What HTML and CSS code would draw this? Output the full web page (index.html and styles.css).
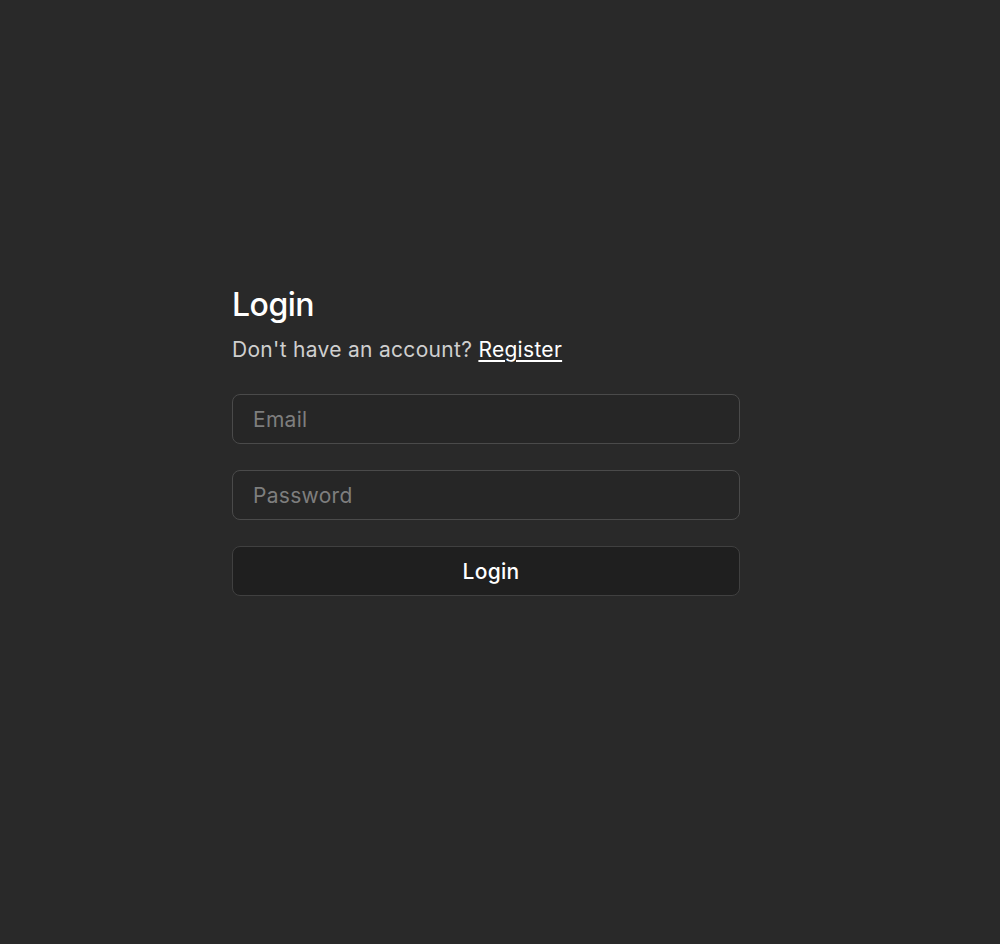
FILE: index.html
```html
<!DOCTYPE html>
<html>
<head>
<meta charset="utf-8">
<link rel="stylesheet" href="styles.css">
</head>
<body>
<main class="page">
  <form class="card">
    <h1 class="title">Login</h1>
    <p class="subtitle">Don't have an account? <a href="#" class="link">Register</a></p>
    <input class="field" type="email" placeholder="Email">
    <input class="field" type="password" placeholder="Password">
    <button class="btn" type="button">Login</button>
  </form>
</main>
</body>
</html>
```

FILE: styles.css
```css
html, body {
  margin: 0;
  padding: 0;
  background: #292929;
  font-family: Inter, "Noto Sans", sans-serif;
}
.page {
  display: flex;
  justify-content: center;
  padding: 286px 28px 0 0;
}
.card {
  width: 508px;
  display: flex;
  flex-direction: column;
}
.title {
  margin: 0;
  font-size: 32px;
  line-height: 38px;
  font-weight: 500;
  letter-spacing: -0.5px;
  color: #ffffff;
}
.subtitle {
  margin: 12px 0 30px;
  font-size: 21px;
  line-height: 28px;
  letter-spacing: 0.3px;
  color: #cfcfcf;
}
.link {
  color: #ffffff;
  text-decoration: underline;
  text-underline-offset: 3px;
}
.field {
  box-sizing: border-box;
  height: 50px;
  margin: 0 0 26px;
  padding: 0 20px;
  border: 1px solid #4a4a4a;
  border-radius: 8px;
  background: #262626;
  color: #fff;
  font-family: inherit;
  font-size: 21px;
  letter-spacing: 0.3px;
  outline: none;
}
.field::placeholder {
  color: #7e7e7e;
}
.btn {
  box-sizing: border-box;
  height: 50px;
  padding: 0 0 0 10px;
  border: 1px solid #404040;
  border-radius: 8px;
  background: #1f1f1f;
  color: #ffffff;
  font-family: inherit;
  font-size: 21px;
  letter-spacing: 0.3px;
  font-weight: 500;
}
```
